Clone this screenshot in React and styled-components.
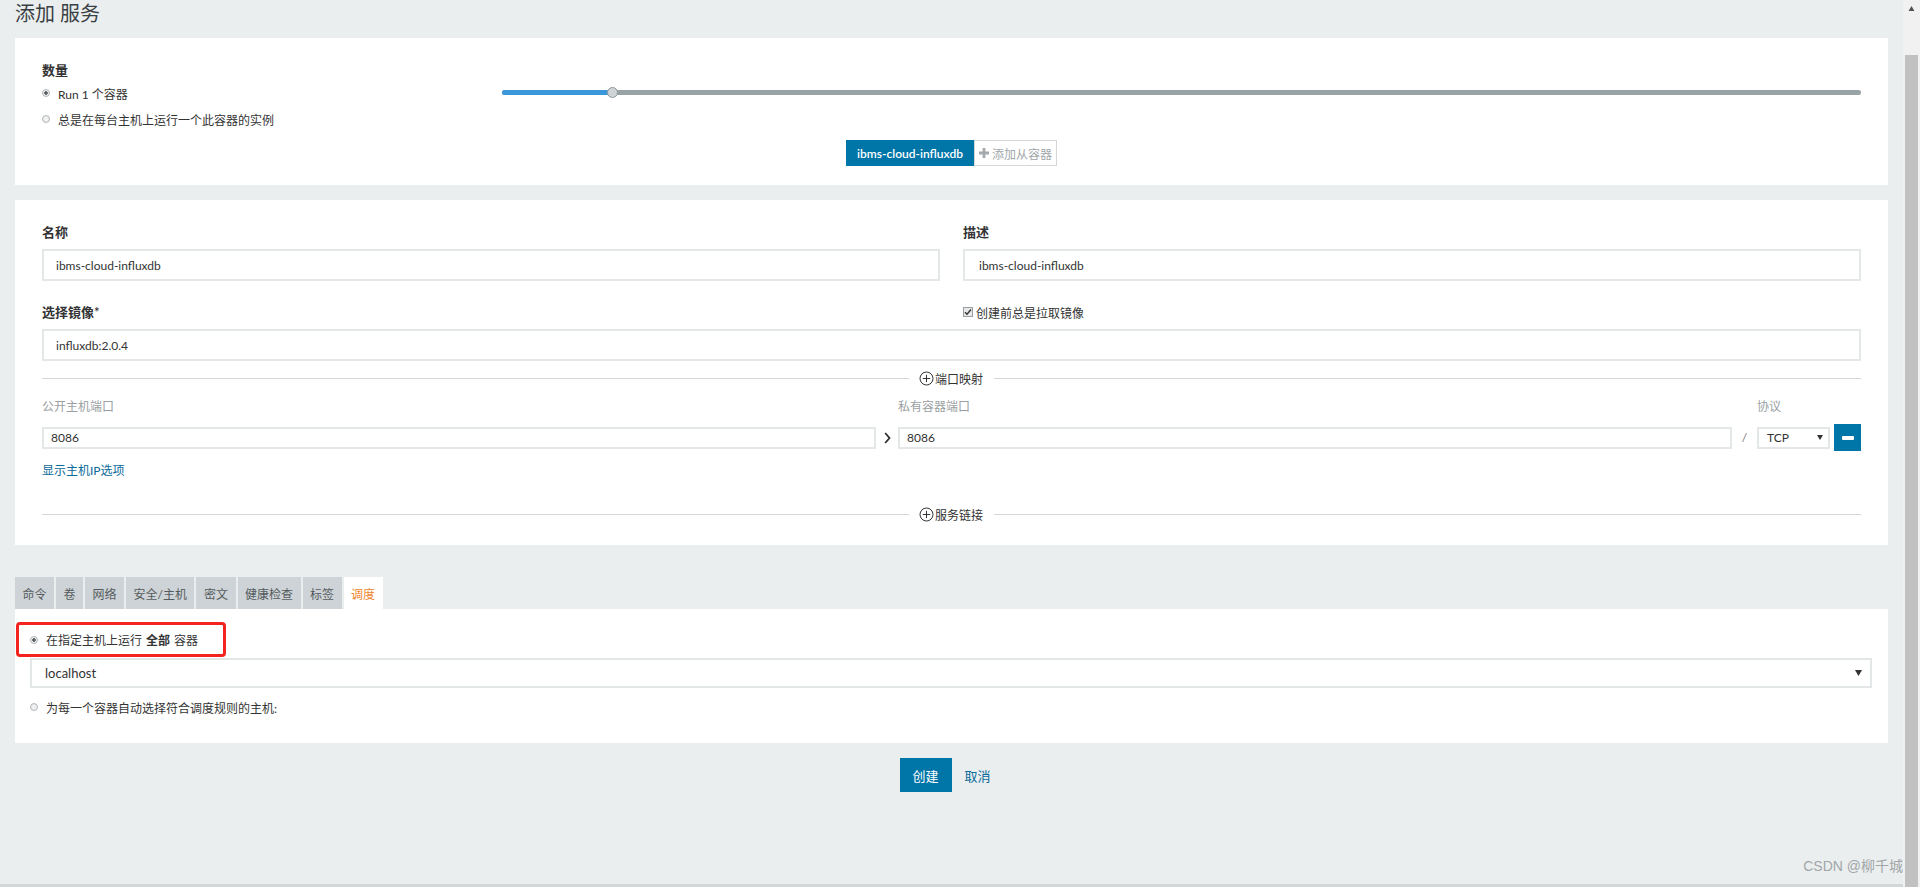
import * as React from 'react';
import styled, { createGlobalStyle } from 'styled-components';

const GlobalStyle = createGlobalStyle`
  html, body {
    margin: 0;
    padding: 0;
  }
  body {
    background: #eaeeef;
    font-family: Lato, "Noto Sans CJK SC", sans-serif;
    font-size: 12px;
    color: #333;
  }
  * {
    box-sizing: border-box;
  }
`;

const Shell = styled.div`
  display: flex;
  height: 100vh;
  overflow: hidden;
`;

const Main = styled.div`
  flex: 1;
  position: relative;
  padding: 0 15px;
  display: flex;
  flex-direction: column;
`;

const Title = styled.h1`
  margin: 0;
  height: 38px;
  font-size: 20px;
  line-height: 27px;
  font-weight: 400;
  color: #3a3f44;
  white-space: pre;
`;

const Panel = styled.div`
  background: #fff;
  padding: ${(p) => p.$pad || '23px 27px 21px'};
  margin-top: ${(p) => p.$mt || 0}px;
`;

const QuantityRow = styled.div`
  display: flex;
  gap: 20px;
`;

const LeftCol = styled.div`
  width: 440px;
`;

const SectionLabel = styled.div`
  font-size: 13px;
  line-height: 18px;
  font-weight: 600;
  color: #333;
  margin-bottom: ${(p) => p.$mb ?? 4}px;
`;

const RadioRow = styled.label`
  display: flex;
  align-items: center;
  gap: 8px;
  height: 20px;
  font-size: 12px;
  color: #333;
  margin-top: ${(p) => p.$mt || 0}px;

  b {
    font-weight: 700;
    margin: 0 4px;
  }
`;

const RadioDot = styled.span`
  width: 8px;
  height: 8px;
  flex: none;
  border-radius: 50%;
  border: 1px solid #b3b7b9;
  background: radial-gradient(circle, ${(p) => (p.$checked ? '#5a5f62 0, #5a5f62 1.5px, #eceeef 2px' : '#f6f6f6 0, #e3e5e6 100%')});
`;

const SliderCol = styled.div`
  flex: 1;
  padding-top: 26px;
`;

const SliderTrack = styled.div`
  position: relative;
  height: 5px;
  border-radius: 3px;
  background: #98a3a6;
  margin-top: 3px;
`;

const SliderFill = styled.div`
  height: 100%;
  border-radius: 3px 0 0 3px;
  background: #3a97d9;
`;

const SliderThumb = styled.span`
  position: absolute;
  top: 50%;
  width: 11px;
  height: 11px;
  margin: -5.5px 0 0 -5.5px;
  border-radius: 50%;
  background: #cfd4d6;
  border: 1px solid #8d979b;
`;

const ButtonGroup = styled.div`
  display: flex;
  justify-content: center;
  margin-top: 11px;
`;

const ContainerTab = styled.div`
  height: 26px;
  display: flex;
  align-items: center;
  gap: 3px;
  padding: 0 ${(p) => (p.$active ? 10 : 4)}px;
  font-size: 12px;
  background: ${(p) => (p.$active ? '#0075a8' : '#fff')};
  color: ${(p) => (p.$active ? '#fff' : '#a1a7aa')};
  border: 1px solid ${(p) => (p.$active ? '#0075a8' : '#d4d7d9')};
  font-weight: ${(p) => (p.$active ? 600 : 400)};
`;

const TwoCol = styled.div`
  display: grid;
  grid-template-columns: 1fr 1fr;
  column-gap: 23px;
  margin-top: ${(p) => p.$mt || 0}px;
`;

const Input = styled.div`
  height: ${(p) => p.$h || 32}px;
  border: 2px solid #e3e7e8;
  padding-left: ${(p) => p.$pl || 12}px;
  display: flex;
  align-items: center;
  font-size: 12px;
  color: #333;
  margin-top: ${(p) => p.$mt || 0}px;
  background: #fff;
`;

const CheckRow = styled.label`
  display: flex;
  align-items: center;
  gap: 3px;
  height: 18px;
  font-size: 12px;
  color: #333;
`;

const CheckBox = styled.span`
  width: 10px;
  height: 10px;
  border: 1px solid #9a9fa2;
  background: #e6e8e9;
  display: flex;
  align-items: center;
  justify-content: center;
`;

const DividerRow = styled.div`
  display: flex;
  align-items: center;
  height: 20px;
  margin-top: ${(p) => p.$mt || 0}px;
  font-size: 12px;
  color: #333;

  &::before,
  &::after {
    content: '';
    flex: 1;
    height: 1px;
    background: #d2d7d9;
  }
`;

const DividerLabel = styled.span`
  display: flex;
  align-items: center;
  gap: 1px;
  margin: 0 11px 0 10px;
`;

const PortGrid = styled.div`
  display: grid;
  grid-template-columns: 1fr 22px 1fr 25px 73px 4px 27px;
  grid-template-rows: 18px 27px;
  row-gap: 8px;
  margin-top: 10px;
  align-items: center;
`;

const SmallLabel = styled.div`
  font-size: 12px;
  line-height: 18px;
  color: #9aa0a3;
  grid-column: ${(p) => p.$col};
`;

const PortInput = styled(Input)`
  height: 22px;
  padding-left: 7px;
`;

const Chevron = styled.span`
  display: flex;
  justify-content: center;
`;

const Slash = styled.span`
  text-align: center;
  color: #777;
  font-size: 12px;
`;

const SmallSelect = styled.div`
  height: 22px;
  border: 2px solid #e3e7e8;
  display: flex;
  align-items: center;
  justify-content: space-between;
  padding: 0 5px 0 8px;
  font-size: 12px;
  color: #333;
`;

const MinusButton = styled.button`
  grid-column: 7;
  width: 27px;
  height: 27px;
  border: 0;
  padding: 0;
  background: #0075a8;
  display: flex;
  align-items: center;
  justify-content: center;

  &::before {
    content: '';
    width: 12px;
    height: 4px;
    border-radius: 1px;
    background: #fff;
  }
`;

const LinkText = styled.a`
  display: block;
  margin-top: 11px;
  font-size: 12px;
  line-height: 18px;
  color: #0a6a9a;
  text-decoration: none;
`;

const Tabs = styled.div`
  display: flex;
  gap: 2px;
  margin-top: 32px;
  height: 32px;
`;

const Tab = styled.div`
  display: flex;
  align-items: center;
  padding: 0 7.5px;
  font-size: 12px;
  background: ${(p) => (p.$active ? '#fff' : '#cdd3d6')};
  color: ${(p) => (p.$active ? '#f0862e' : '#555b5e')};
`;

const Highlight = styled.div`
  width: 210px;
  height: 35px;
  margin-left: -14px;
  border: 3px solid #f5231f;
  border-radius: 4px;
  padding-left: 11px;
  display: flex;
  align-items: center;
`;

const HostSelect = styled(Input)`
  height: 30px;
  margin-top: 1px;
  padding: 0 8px 0 13px;
  justify-content: space-between;
  font-size: 13px;
`;

const Footer = styled.div`
  display: flex;
  justify-content: center;
  margin-top: 15px;
`;

const FooterButton = styled.button`
  width: 52px;
  height: 34px;
  border: 0;
  font-family: inherit;
  font-size: 13px;
  background: ${(p) => (p.$primary ? '#0075a8' : 'transparent')};
  color: ${(p) => (p.$primary ? '#fff' : '#0a6a9a')};
`;

const BottomEdge = styled.div`
  position: absolute;
  left: 0;
  right: 0;
  bottom: 0;
  height: 3px;
  background: #d3d7d8;
`;

const Watermark = styled.div`
  position: absolute;
  right: 0;
  bottom: 12px;
  font-size: 14px;
  color: #a2a6a8;
  font-family: "Liberation Sans", "Noto Sans CJK SC", sans-serif;
`;

const Scrollbar = styled.div`
  width: 17px;
  flex: none;
  background: #f1f1f1;
  display: flex;
  flex-direction: column;
  align-items: center;
`;

const ScrollArrow = styled.div`
  height: 17px;
  display: flex;
  align-items: center;
  justify-content: center;
`;

const ScrollThumb = styled.div`
  width: 13px;
  margin-top: 38px;
  flex: 1;
  background: #c1c1c1;
`;

const Triangle = ({ up, color = '#333', w = 7, h = 6 }) => (
  <svg width={w} height={h} viewBox="0 0 7 6">
    <polygon points={up ? '3.5,0 7,6 0,6' : '0,0 7,0 3.5,6'} fill={color} />
  </svg>
);

const CirclePlus = () => (
  <svg width="15" height="15" viewBox="0 0 15 15">
    <circle cx="7.5" cy="7.5" r="6.5" fill="none" stroke="#333" strokeWidth="1" />
    <path d="M7.5 3.8v7.4M3.8 7.5h7.4" stroke="#333" strokeWidth="1" />
  </svg>
);

const Divider = ({ label, mt }) => (
  <DividerRow $mt={mt}>
    <DividerLabel>
      <CirclePlus />
      {label}
    </DividerLabel>
  </DividerRow>
);

const tabs = ['命令', '卷', '网络', '安全/主机', '密文', '健康检查', '标签', '调度'];

export default function App() {
  const scale = 1;
  const scaleMax = 12.35;
  const pct = (scale / scaleMax) * 100;

  return (
    <Shell>
      <GlobalStyle />
      <Main>
        <Title>添加 服务</Title>

        <Panel $pad="23px 27px 19px">
          <QuantityRow>
            <LeftCol>
              <SectionLabel>数量</SectionLabel>
              <RadioRow>
                <RadioDot $checked />
                Run 1 个容器
              </RadioRow>
              <RadioRow $mt={6}>
                <RadioDot />
                总是在每台主机上运行一个此容器的实例
              </RadioRow>
            </LeftCol>
            <SliderCol>
              <SliderTrack>
                <SliderFill style={{ width: `${pct}%` }} />
                <SliderThumb style={{ left: `${pct}%` }} />
              </SliderTrack>
            </SliderCol>
          </QuantityRow>
          <ButtonGroup>
            <ContainerTab $active>ibms-cloud-influxdb</ContainerTab>
            <ContainerTab>
              <svg width="10" height="10" viewBox="0 0 10 10">
                <path d="M3.6 0h2.8v3.6H10v2.8H6.4V10H3.6V6.4H0V3.6h3.6z" fill="#a3a9ac" />
              </svg>
              添加从容器
            </ContainerTab>
          </ButtonGroup>
        </Panel>

        <Panel $mt={15}>
          <TwoCol>
            <div>
              <SectionLabel $mb={8}>名称</SectionLabel>
              <Input $pl={12}>ibms-cloud-influxdb</Input>
            </div>
            <div>
              <SectionLabel $mb={8}>描述</SectionLabel>
              <Input $pl={14}>ibms-cloud-influxdb</Input>
            </div>
          </TwoCol>
          <TwoCol $mt={22}>
            <SectionLabel $mb={0}>选择镜像*</SectionLabel>
            <CheckRow>
              <CheckBox>
                <svg width="8" height="8" viewBox="0 0 8 8">
                  <path d="M1 4.2l2 2L7 1.5" fill="none" stroke="#333" strokeWidth="1.4" />
                </svg>
              </CheckBox>
              创建前总是拉取镜像
            </CheckRow>
          </TwoCol>
          <Input $mt={8} $pl={12}>influxdb:2.0.4</Input>

          <Divider label="端口映射" mt={7} />

          <PortGrid>
            <SmallLabel $col={1}>公开主机端口</SmallLabel>
            <SmallLabel $col={3}>私有容器端口</SmallLabel>
            <SmallLabel $col={5}>协议</SmallLabel>
            <PortInput style={{ gridColumn: 1 }}>8086</PortInput>
            <Chevron>
              <svg width="7" height="12" viewBox="0 0 7 12">
                <path d="M1.2 1l4.3 5-4.3 5" fill="none" stroke="#2b2f31" strokeWidth="1.8" />
              </svg>
            </Chevron>
            <PortInput>8086</PortInput>
            <Slash>/</Slash>
            <SmallSelect>
              TCP
              <Triangle w={6} h={7} />
            </SmallSelect>
            <MinusButton aria-label="remove" />
          </PortGrid>

          <LinkText href="#">显示主机IP选项</LinkText>

          <Divider label="服务链接" mt={24} />
        </Panel>

        <Tabs>
          {tabs.map((t) => (
            <Tab key={t} $active={t === '调度'}>
              {t}
            </Tab>
          ))}
        </Tabs>

        <Panel $pad="13px 16px 26px 15px">
          <Highlight>
            <RadioRow>
              <RadioDot $checked />
              <span>
                在指定主机上运行<b>全部</b>容器
              </span>
            </RadioRow>
          </Highlight>
          <HostSelect>
            localhost
            <Triangle w={7} h={8} />
          </HostSelect>
          <RadioRow $mt={9}>
            <RadioDot />
            为每一个容器自动选择符合调度规则的主机:
          </RadioRow>
        </Panel>

        <Footer>
          <FooterButton $primary>创建</FooterButton>
          <FooterButton>取消</FooterButton>
        </Footer>

        <BottomEdge />
        <Watermark>CSDN @柳千城</Watermark>
      </Main>
      <Scrollbar>
        <ScrollArrow>
          <Triangle up color="#505050" w={7} h={5} />
        </ScrollArrow>
        <ScrollThumb />
      </Scrollbar>
    </Shell>
  );
}
